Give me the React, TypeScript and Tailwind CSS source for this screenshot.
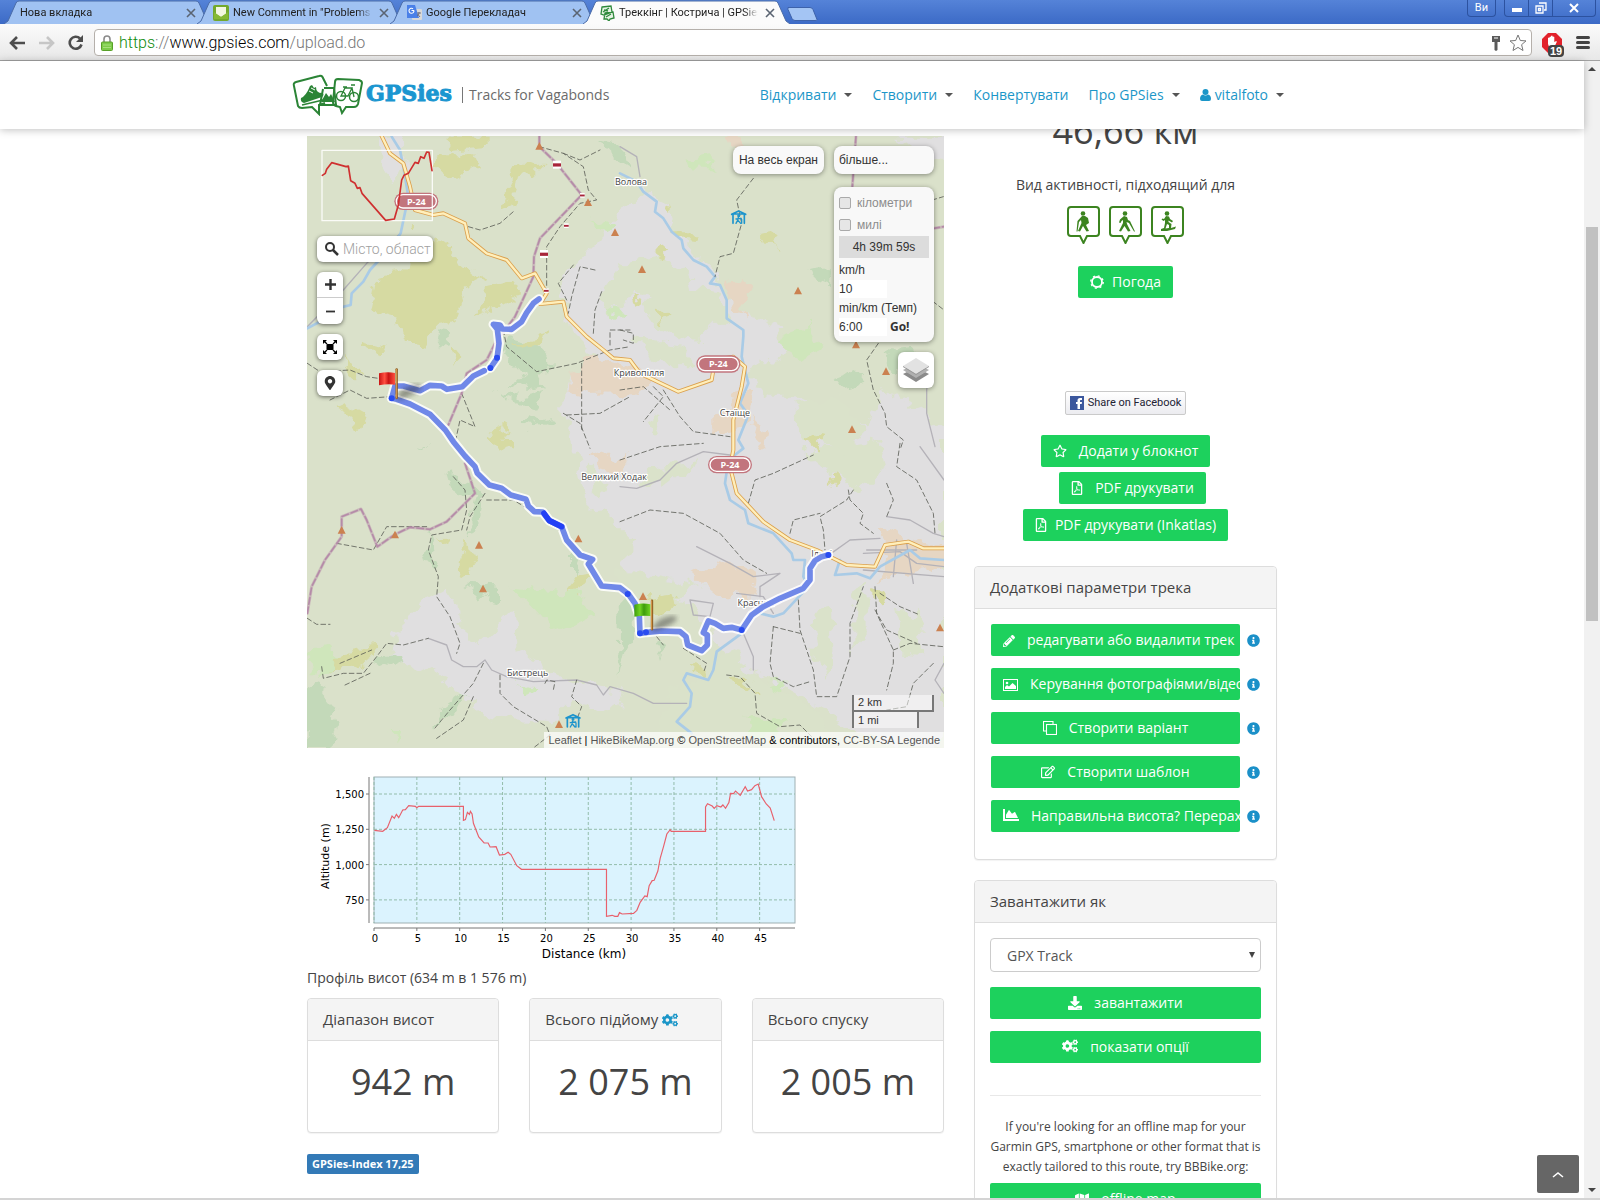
import type { ReactNode } from "react";
import {
  FaChartArea,
  FaCogs,
  FaDownload,
  FaInfoCircle,
  FaMap,
  FaMapMarkerAlt,
  FaPencilAlt,
  FaRegEdit,
  FaRegFilePdf,
  FaRegStar,
} from "react-icons/fa";

const tabs = [
  { title: "Нова вкладка", icon: null },
  { title: 'New Comment in "Problems in', icon: "mail" },
  { title: "Google Перекладач", icon: "translate" },
  { title: "Треккінг | Кострича | GPSies", icon: "gpsies", active: true },
];

const navItems = [
  { label: "Відкривати", caret: true },
  { label: "Створити", caret: true },
  { label: "Конвертувати", caret: false },
  { label: "Про GPSies", caret: true },
  { label: "vitalfoto", caret: true, user: true },
];

const stats = [
  { title: "Діапазон висот", value: "942 m" },
  { title: "Всього підйому", value: "2 075 m", cogs: true },
  { title: "Всього спуску", value: "2 005 m" },
];

// Map drawing, three units per pixel
const yellowPatches = [
  "M330 305 L440 330 L470 400 L560 440 L500 470 L470 560 L400 600 L380 650 L320 640 L300 560 L210 540 L230 440 L320 420Z",
  "M420 70 L520 70 L540 110 L470 140 L400 120Z",
  "M430 20 L560 20 L560 50 L460 60Z",
  "M660 105 L740 90 L690 140 L650 150 L640 220 L600 240 L620 180Z",
  "M560 470 L640 450 L650 500 L590 530 L520 560 L560 510Z",
  "M630 640 L740 600 L730 640 L660 650Z",
  "M110 810 L200 860 L180 900 L130 850Z",
  "M140 680 L185 740 L170 760 L130 720Z",
  "M570 910 L620 890 L600 950 L570 930Z",
  "M190 630 L260 650 L250 670 L195 650Z",
  "M455 650 L490 690 L470 710Z",
  "M90 1615 L130 1570 L215 1555 L220 1585 L150 1610Z",
  "M470 1320 L495 1230 L530 1320 L520 1335Z",
  "M410 1220 L450 1215 L440 1240Z",
  "M570 930 L640 930 L635 965 L590 950Z",
  "M810 1330 L880 1320 L860 1370 L820 1390Z",
  "M1120 310 L1190 310 L1180 335 L1130 330Z",
  "M1090 220 L1120 225 L1110 250Z",
  "M1390 320 L1440 310 L1425 360Z",
  "M1060 365 L1110 360 L1100 390Z",
  "M1040 1400 L1120 1390 L1130 1430 L1060 1450Z",
  "M1160 1605 L1230 1610 L1220 1640 L1170 1625Z",
  "M1280 1635 L1340 1640 L1370 1700 L1320 1680Z",
  "M1720 1380 L1760 1390 L1750 1430 L1720 1410Z",
  "M1000 490 L1020 490 L1010 530Z",
  "M1070 545 L1110 550 L1090 580Z",
  "M1520 920 L1580 930 L1550 960Z",
  "M1590 1050 L1620 1045 L1615 1080Z",
];
const greenPatches = [
  "M610 610 L700 630 L740 680 L745 740 L660 735 L600 660Z",
  "M590 780 L660 800 L745 780 L710 830 L650 820Z",
  "M660 880 L750 855 L740 880 L680 900Z",
  "M415 610 L450 615 L445 645 L410 640Z",
  "M890 25 L960 40 L990 120 L940 80Z",
  "M440 1030 L510 1060 L550 1080 L520 1220 L505 1160 L520 1100 L450 1065Z",
  "M380 1250 L395 1210 L410 1290 L400 1310 L370 1290Z",
  "M490 1360 L600 1370 L600 1410 L550 1400Z",
  "M810 1260 L835 1280 L810 1340Z",
  "M230 1600 L240 1570 L320 1565 L280 1620Z",
  "M400 1800 L430 1740 L500 1690 L450 1770Z",
  "M20 1680 L60 1660 L110 1780 L90 1854 L20 1854Z",
  "M350 960 L400 920 L370 950Z",
  "M620 760 L720 730 L740 770 L690 775Z",
  "M1600 750 L1670 725 L1700 760 L1640 780Z",
  "M1760 660 L1840 650 L1880 710 L1900 760 L1780 710Z",
  "M1510 430 L1590 420 L1580 460 L1550 450Z",
  "M955 1450 L1000 1400 L1010 1500 L980 1560 L960 1640Z",
  "M1060 1520 L1100 1540 L1080 1590Z",
];
const brightPatches = [
  "M1440 620 L1520 590 L1560 650 L1500 690 L1450 660Z",
  "M1150 80 L1230 70 L1250 110 L1180 105Z",
  "M640 1370 L840 1390 L880 1450 L760 1500 L700 1430Z",
  "M880 250 L940 290 L920 330Z",
  "M925 540 L985 550 L960 570Z",
  "M20 1560 L90 1550 L120 1600 L50 1640Z",
  "M1400 1660 L1450 1650 L1450 1680Z",
  "M1330 1760 L1460 1780 L1420 1820 L1350 1800Z",
  "M270 1800 L300 1800 L295 1835Z",
  "M640 1650 L700 1670 L690 1700Z",
];
const greyPatches = [
  "M780 460 L860 370 L900 330 L960 240 L1040 200 L1120 300 L1230 430 L1320 540 L1440 590 L1460 680 L1340 720 L1400 800 L1480 800 L1560 840 L1700 880 L1740 780 L1800 800 L1932 890 L1932 1854 L1700 1830 L1540 1720 L1400 1640 L1280 1600 L1240 1500 L1180 1440 L1050 1380 L960 1290 L1010 1240 L960 1190 L850 1090 L830 960 L790 850 L790 760 L900 690 L810 600Z",
  "M245 20 L300 20 L330 120 L270 150 L240 100Z",
  "M350 1420 L440 1370 L470 1480 L540 1540 L640 1440 L650 1560 L820 1660 L960 1690 L940 1740 L820 1720 L760 1780 L560 1760 L420 1640 L270 1570Z",
  "M1790 20 L1932 20 L1932 90 L1880 80Z",
  "M1030 180 L1110 220 L1130 300 L1040 260Z",
];
const groveOverGrey = [
  "M1510 960 L1740 930 L1760 1020 L1680 1070 L1600 1040Z",
  "M1080 1010 L1180 1000 L1090 1070 L1010 1050Z",
  "M960 1320 L1200 1370 L1100 1430 L960 1390Z",
  "M1200 1650 L1300 1560 L1340 1620 L1560 1750 L1600 1854 L1060 1854 L1100 1700Z",
  "M1660 1380 L1700 1360 L1700 1520 L1660 1560Z",
  "M1780 1440 L1860 1450 L1870 1570 L1800 1560Z",
  "M1040 860 L1100 870 L1070 920Z",
  "M1130 470 L1260 480 L1280 560 L1200 640 L1080 600 L1020 520Z",
  "M960 400 L1100 380 L1180 440 L1120 520 L1000 480 L940 560 L900 500Z",
  "M1480 820 L1600 800 L1700 900 L1640 960 L1500 920Z",
  "M1000 620 L1160 650 L1180 700 L1060 700Z",
  "M880 1010 L930 1060 L900 1100 L860 1060Z",
  "M1540 1450 L1590 1440 L1600 1600 L1560 1640Z",
];
const sandPatches = [
  "M830 710 L880 680 L960 700 L1030 720 L1070 750 L1000 790 L870 795 L790 775Z",
  "M1285 460 L1330 450 L1360 480 L1330 520 L1345 560 L1300 550Z",
  "M1310 780 L1370 780 L1340 900 L1240 910 L1240 870Z",
  "M1180 1340 L1270 1290 L1370 1340 L1360 1400 L1240 1390Z",
  "M1370 850 L1400 910 L1390 950 L1350 930Z",
  "M1720 1180 L1800 1210 L1932 1250 L1932 1300 L1850 1330 L1730 1350 L1780 1280Z",
  "M870 970 L960 1000 L1000 970 L960 1030 L900 1015Z",
  "M1260 30 L1310 0 L1320 60Z",
];
const rivers = [
  "M275 20 L300 60 L310 110 L325 200 L302 310 L270 355 L210 420 L190 455 L155 490 L152 525 L110 535 L60 575 L22 595",
  "M960 130 L1010 155 L1030 185 L1070 215 L1065 245 L1090 265 L1115 305 L1145 330 L1150 355 L1180 390 L1220 410 L1245 440 L1230 460 L1260 465 L1280 510 L1280 565 L1330 600 L1330 620 L1325 680 L1345 760 L1320 820 L1345 855 L1315 930 L1330 955 L1285 990 L1275 1060 L1290 1110 L1335 1140 L1345 1180 L1420 1210 L1475 1270 L1480 1290 L1515 1290 L1510 1340 L1525 1370 L1450 1450 L1420 1460 L1380 1450",
  "M1620 1290 L1605 1335 L1670 1330 L1710 1345 L1740 1310 L1830 1260 L1860 1285 L1932 1290",
  "M1325 1510 L1250 1565 L1240 1620 L1225 1650 L1160 1630 L1150 1650 L1175 1690 L1170 1730 L1130 1775 L1175 1810",
];
const mainRoad =
  "M245 18 L270 70 L310 100 L330 170 L345 240 L400 255 L430 250 L495 280 L505 325 L560 370 L620 390 L665 445 L705 430 L740 490 L720 522 L790 515 L800 560 L860 620 L910 660 L940 685 L990 690 L1020 730 L1135 785 L1235 750 L1245 690 L1300 680 L1335 710 L1325 770 L1300 870 L1300 960 L1290 1010 L1310 1090 L1390 1175 L1470 1230 L1550 1260 L1640 1305 L1725 1310 L1755 1245 L1825 1235 L1870 1255 L1932 1255";
const borders = [
  "M718 18 L718 50 L770 100 L845 195 L720 325 L702 380 L700 440 L645 560 L585 640 L560 690 L500 730 L485 790 L445 885",
  "M495 1000 L525 1090 L440 1175 L390 1198 L330 1192 L285 1213 L232 1250 L200 1170 L183 1137 L125 1160 L125 1220 L75 1290 L35 1370 L22 1450",
  "M1668 18 L1657 170",
  "M1870 300 L1932 290",
];
const footpaths = [
  "M718 50 L790 70 L850 110 L865 180 L890 210 L840 220 L780 290 L740 350 L740 480",
  "M790 70 L840 90 L900 60",
  "M505 290 L540 300 L600 280 L640 245",
  "M610 600 L620 650 L710 725 L830 700 L930 660 L990 650",
  "M820 405 L775 460 L800 510 M885 420 L840 410 L815 500 L805 550",
  "M905 485 L885 540 L880 610 M930 645 L930 600 L990 600",
  "M790 850 L840 880 L870 955 M845 700 L845 900 M800 855 L900 850 L990 800",
  "M22 700 L60 725 L150 720 L200 740 L270 750 M90 810 L150 780 L200 805 L270 800",
  "M485 790 L525 890 L480 870 L465 940",
  "M110 1240 L220 1260 L260 1190 L380 1190 M460 1040 L495 1080 L500 1140 L485 1200 L395 1215 L385 1260 L415 1340 L410 1400 L450 1460 L480 1540 L470 1570",
  "M555 1090 L510 1160 L500 1200 M560 1110 L640 1110 L690 1140",
  "M22 1465 L50 1483 L90 1483",
  "M65 1610 L70 1645 L130 1630 L190 1630 L230 1580 L260 1540 L310 1545 L385 1525 M120 1600 L215 1560 M135 1665 L210 1630",
  "M550 1600 L520 1660 L450 1740 L400 1800 M520 1700 L490 1770 L410 1825",
  "M600 1635 L600 1690 L640 1730 L740 1790 L750 1815 L700 1854",
  "M830 1650 L815 1700 L845 1730 L830 1770 M735 1660 L740 1650 L765 1655 L760 1680",
  "M1360 145 L1310 210 L1325 280 L1300 370 L1260 380 L1245 440",
  "M960 600 L1000 610 L1000 640 L970 630 M1060 770 L1090 800 L1030 875 M1090 780 L1140 860 L1180 905 L1290 920",
  "M960 780 L1030 770 L1110 840",
  "M1735 640 L1700 690 L1720 780 L1755 850 L1760 890 L1810 930 L1800 960",
  "M960 990 L1080 950 L1210 940 M960 1175 L1050 1140 L1150 1150 L1260 1210 L1330 1290 L1400 1330",
  "M1345 1120 L1365 1050 L1420 1030 L1540 975",
  "M1660 1080 L1640 1110 L1560 1160 L1570 1200 L1575 1260 M1645 1080 L1650 1110 L1690 1150 L1680 1180 L1720 1210",
  "M1800 940 L1790 1010 L1850 1050 L1900 1150 L1905 1210 M1760 1060 L1780 1110 L1760 1160",
  "M1470 1210 L1480 1170 L1560 1150",
  "M1420 1490 L1410 1600 L1420 1640 L1480 1670 L1530 1655 M1420 1490 L1500 1510",
  "M1495 1410 L1500 1500 L1540 1620 L1550 1700 L1610 1700 L1650 1580 L1650 1480 L1690 1370",
  "M1725 1370 L1730 1450 L1780 1560 L1780 1600 L1760 1680 M1740 1390 L1800 1430 L1860 1455 M1780 1560 L1830 1540 L1930 1550",
  "M1725 1440 L1760 1500 L1850 1540 M1900 1600 L1840 1660 L1820 1730 L1760 1740",
  "M1280 1635 L1320 1640 L1365 1690 L1370 1750 L1440 1790 L1500 1785 L1535 1820",
  "M1070 1520 L1090 1545 M1150 1555 L1220 1600 L1210 1630",
  "M1880 500 L1932 540 M1830 230 L1930 200",
];
const greyRoads = [
  "M302 310 L200 400 L130 480 L22 590",
  "M385 1525 L440 1545 L455 1590 L490 1610 L530 1610 L555 1590 L575 1620 L620 1640 L700 1655 L830 1650 L890 1665 L910 1695 L930 1670 L1000 1690 L1060 1720 L1160 1720",
  "M960 50 L1010 80 L1020 140",
  "M960 1070 L1010 1075 L1080 1050 L1130 1000 L1210 965 L1290 975",
  "M1190 1250 L1290 1300 L1360 1340 L1440 1330 L1380 1370 L1380 1400",
  "M1170 1410 L1240 1420 L1230 1460 L1180 1455Z",
  "M1310 1390 L1390 1400 L1420 1450 M1330 1510 L1360 1580 L1360 1620",
  "M1580 1280 L1650 1230 L1740 1225 M1690 1270 L1800 1265 L1850 1300 L1932 1310",
  "M1760 1160 L1830 1170 L1900 1210 L1932 1220 M1860 950 L1932 1050",
  "M1890 710 L1880 780 L1880 850 L1905 950",
  "M1700 1260 L1850 1260 M1690 1320 L1932 1340 M1790 1230 L1780 1340 M1820 1240 L1840 1360",
  "M1932 1600 L1905 1650 L1932 1690",
];
const peaks = [
  [718, 48], [864, 217], [945, 307], [1026, 418], [1494, 482], [1668, 644], [1758, 724], [1656, 898],
  [125, 1200], [285, 1214], [537, 1245], [549, 1376], [835, 1226], [777, 1783], [1029, 1399], [1920, 1493],
];
const barriers = [[771, 104, 24], [847, 196, 14], [799, 287, 14], [732, 372, 24], [739, 482, 14]];
const track = [
  "M717 507 L700 520 L680 548 L665 575 L635 598 L607 597 L600 585 L580 583 L592 598 L597 640 L591 685 L571 714",
  "M553 722 L520 738 L487 770 L441 778 L425 768 L390 766 L360 782 L310 768 L285 768 L275 805 L290 808 L330 822 L390 853 L436 900 L460 935 L495 978 L525 1010 L532 1030 L568 1065 L605 1075 L632 1095 L678 1108 L685 1128 L703 1145 L728 1146 L748 1172 L785 1190 L800 1230 L840 1275 L878 1288 L865 1302 L905 1368 L960 1373 L985 1392 L1005 1420 L1018 1460 L1020 1510 L1040 1507 L1085 1503 L1140 1505 L1158 1520 L1163 1545 L1205 1562 L1222 1545 L1222 1515 L1210 1508 L1225 1473 L1245 1480 L1270 1495 L1295 1492 L1325 1500 L1355 1455 L1390 1430 L1440 1405 L1510 1375 L1530 1350 L1530 1315 L1545 1292 L1565 1280 L1585 1275",
];
const trackDots = [[591, 683], [571, 714], [275, 805], [983, 1392], [1020, 1510], [1038, 1507], [1325, 1500], [1585, 1275]];
const places = [
  ["Волова", 993, 166], ["Кривопілля", 1017, 737], ["Стаїще", 1305, 859], ["Великий Ходак", 942, 1051],
  ["Красник", 1367, 1429], ["Бистрець", 683, 1638], ["Ільці", 1565, 1282],
] as const;
const shields = [[349, 214], [1255, 702], [1290, 1004]];
const huts = [[1316, 262], [819, 1773]];

// Altitude trace, three units per pixel
const profile =
  "M223 196 L248 199 L262 188 L276 153 L283 160 L289 148 L296 158 L308 135 L316 134 L326 122 L346 124 L350 128 L356 124 L490 124 L490 166 L496 164 L502 142 L508 148 L511 139 L516 147 L520 175 L536 216 L552 234 L564 234 L570 246 L588 245 L598 270 L614 268 L624 262 L632 268 L650 302 L664 313 L919 313 L919 454 L936 451 L944 454 L953 454 L958 443 L966 447 L1000 445 L1010 436 L1020 412 L1034 393 L1041 395 L1047 362 L1056 347 L1062 346 L1073 318 L1080 280 L1090 245 L1100 207 L1110 194 L1113 199 L1216 199 L1216 126 L1222 116 L1236 123 L1242 130 L1250 122 L1262 126 L1268 120 L1276 130 L1286 113 L1291 85 L1300 86 L1306 78 L1320 91 L1335 65 L1342 78 L1354 74 L1364 62 L1374 57 L1384 95 L1398 117 L1410 129 L1422 167";

function Caret() {
  return <span className="ml-1 inline-block border-x-4 border-t-4 border-x-transparent border-t-[#555] align-middle" />;
}

function Favicon({ kind }: { kind: string }) {
  if (kind === "mail")
    return (
      <svg viewBox="0 0 16 16" className="size-4 shrink-0">
        <rect width="16" height="16" rx="2" fill="#73a92c" />
        <path d="M3 2h10v7l-5 3-5-3z" fill="#f3f7df" />
        <path d="M1 7l7 5 7-5v7H1z" fill="#86b934" />
      </svg>
    );
  if (kind === "translate")
    return (
      <svg viewBox="0 0 16 16" className="size-4 shrink-0">
        <rect x="6" y="4" width="10" height="11" rx="1" fill="#d9d9d9" />
        <path d="M1 0h8l4 13H1z" fill="#4a80e8" />
        <path d="M8 5.500A2.500 2.500 0 1 1 7 3.700M5.500 5.500H8" fill="none" stroke="#fff" strokeWidth="1.100" />
        <path d="M11 8h4M13 7v1c0 2-2 3-2 3m.5-2 2.500 3" fill="none" stroke="#667" strokeWidth=".9" />
      </svg>
    );
  return (
    <svg viewBox="0 0 16 16" className="size-4 shrink-0">
      <path d="M3 2l9-1 1 6-8 3-3-1zM6 8l8-1 1 6-4 1-1 2-2-2H5z" fill="#e7f4e5" stroke="#2f8a3c" strokeWidth="1.300" />
      <path d="M4 7l6-4M7 12l5-3M5 5l4 1" stroke="#2f8a3c" strokeWidth="1.300" />
    </svg>
  );
}

function BrowserChrome() {
  return (
    <div className="shrink-0 font-[Roboto,sans-serif]">
      <div className="flex h-6 items-start justify-between bg-linear-to-b from-[#5583d8] to-[#3c6ac6]">
        <div className="flex pl-1">
          {tabs.map((tab) => (
            <div key={tab.title} className={tab.active ? "relative z-10 -mr-3.5 h-6 w-[207px]" : "relative -mr-3.5 h-6 w-[207px]"}>
              <svg viewBox="0 0 207 24" preserveAspectRatio="none" className="absolute inset-0 size-full">
                <path d="M0 24L4 21L12 3Q13 1 15 1H192Q194 1 195 3L203 21L207 24" fill={tab.active ? "#fbfbfb" : "#a0c2f2"} stroke="#4b6ca8" />
              </svg>
              <div className="relative flex h-6 items-center gap-1 pt-0.5 pr-3 pl-4 text-[11px] text-[#222]">
                {tab.icon && <Favicon kind={tab.icon} />}
                <span className="flex-1 overflow-hidden whitespace-nowrap mask-r-from-90%">{tab.title}</span>
                <button aria-label="Закрити вкладку" className="flex size-4 items-center justify-center">
                  <svg viewBox="0 0 10 10" className="size-2.5">
                    <path d="M1 1l8 8M9 1L1 9" stroke="#5a6472" strokeWidth="1.600" />
                  </svg>
                </button>
              </div>
            </div>
          ))}
          <button aria-label="Нова вкладка" className="ml-2.5 pt-1">
            <svg viewBox="0 0 32 15" className="h-4 w-8">
              <path d="M2 1H24Q26 1 27 3L31 13Q31 14 29 14H9Q7 14 6 12L2 3Z" fill="#a4c5f4" stroke="#3d62aa" />
            </svg>
          </button>
        </div>
        <div className="flex gap-2 pr-1 text-[11px] text-white">
          <button className="h-[17px] rounded-b border border-t-0 border-[#2c52a0] px-[7px] leading-4">Ви</button>
          <div className="flex h-[17px] divide-x divide-[#2c52a0] rounded-b border border-t-0 border-[#2c52a0]">
            <button aria-label="Згорнути" className="flex w-6 items-end justify-center pb-1">
              <span className="h-1 w-2.5 bg-white" />
            </button>
            <button aria-label="Розгорнути" className="flex w-6 items-center justify-center">
              <svg viewBox="0 0 12 12" className="size-3">
                <path d="M4 1h7v7H9M1 4h7v7H1zM3.500 6.500h2v2h-2z" fill="none" stroke="#fff" strokeWidth="1.300" />
              </svg>
            </button>
            <button aria-label="Закрити" className="flex w-[42px] items-center justify-center font-bold">
              <svg viewBox="0 0 10 10" className="size-2.5">
                <path d="M1 1l8 8M9 1L1 9" stroke="#fff" strokeWidth="2" />
              </svg>
            </button>
          </div>
        </div>
      </div>
      <div className="flex h-[37px] items-center gap-2.5 border-b border-[#a3a3a3] bg-linear-to-b from-[#fbfbfb] to-[#e8e8e8] pt-px pr-2.5 pl-2">
        <div className="flex items-center gap-3">
          <button aria-label="Назад">
            <svg viewBox="0 0 18 16" className="h-4 w-[18px]">
              <path d="M17 8H3M9 2L3 8l6 6" fill="none" stroke="#4d4d4d" strokeWidth="2.600" />
            </svg>
          </button>
          <button aria-label="Вперед">
            <svg viewBox="0 0 18 16" className="h-4 w-[18px]">
              <path d="M1 8h14M9 2l6 6-6 6" fill="none" stroke="#c6c6c6" strokeWidth="2.600" />
            </svg>
          </button>
          <button aria-label="Оновити">
            <svg viewBox="0 0 16 16" className="size-4">
              <path d="M13.500 9.500A6 6 0 1 1 12 3.500" fill="none" stroke="#4d4d4d" strokeWidth="2.600" />
              <path d="M15 0v7H8z" fill="#4d4d4d" />
            </svg>
          </button>
        </div>
        <div className="flex h-[27px] flex-1 items-center rounded-sm border border-[#b5b0ab] bg-white pr-1 pl-1.5">
          <svg viewBox="0 0 12 16" className="h-4 w-3">
            <path d="M3 7V4a3 3 0 0 1 6 0v3" fill="none" stroke="#8b8b8b" strokeWidth="1.600" />
            <rect x=".5" y="7" width="11" height="8.500" rx="1" fill="#7ccb4a" stroke="#58a028" />
            <path d="M2 10h8M2 12.500h8" stroke="#a7e07c" />
          </svg>
          <div className="flex-1 pl-1.5 text-base font-light text-[#777]">
            <span className="text-[#0c8a0c]">https</span>://<span className="text-black">www.gpsies.com</span>/upload.do
          </div>
          <svg viewBox="0 0 10 16" className="mr-2 h-4 w-2.5">
            <path d="M1 1h8v6H6.500v8L5 16l-1.500-1V7H1z" fill="#5a5a5a" />
            <path d="M3 3h4" stroke="#fff" />
          </svg>
          <svg viewBox="0 0 18 18" className="size-[18px]">
            <path d="M9 1l2.300 5.500 5.700.4-4.400 3.800 1.400 5.800L9 13.400l-5 3.100 1.400-5.800L1 6.900l5.700-.4z" fill="#fff" stroke="#777" />
          </svg>
        </div>
        <div className="relative">
          <svg viewBox="0 0 20 20" className="size-5">
            <path d="M6 0h8l6 6v8l-6 6H6l-6-6V6z" fill="#e2222b" />
            <path d="M6 11V5q1-1 1.500 0V4Q8.500 3 9 4V3q1-1 1.700 0v1q1-.8 1.600 0v5l2-1q1 .5 0 2l-3 6H8z" fill="#fff" />
          </svg>
          <span className="absolute top-3 left-1.5 rounded-sm bg-[#444] px-0.5 font-['Liberation_Sans',sans-serif] text-[11px] leading-3 font-bold text-white">19</span>
        </div>
        <button aria-label="Меню" className="ml-1 flex w-3.5 flex-col gap-0.5">
          <span className="h-[3px] rounded-sm bg-[#444]" />
          <span className="h-[3px] rounded-sm bg-[#444]" />
          <span className="h-[3px] rounded-sm bg-[#444]" />
        </button>
      </div>
    </div>
  );
}

function Logo() {
  return (
    <svg viewBox="0 0 72 42" className="h-[42px] w-[72px] shrink-0" fill="none" stroke="#2b8436" strokeWidth="2">
      <path d="M4 8Q1 9 2 12L6 32Q7 34 10 34L20 33L27 40V31L33 29M35 12L31 4Q30 1 27 2L4 8" />
      <path d="M32 14H42L44 31H28L31 15" />
      <path d="M46 5Q43 5 43 8L41 28Q41 31 44 32L48 33L50 39L54 33L62 33Q65 33 66 30L70 9Q70 7 67 6Z" />
      <path d="M9 24Q14 22 18 12L20 11L22 14L24 13Q24 19 30 19Q33 20 30 23L12 29Q8 28 9 24Z" fill="#2b8436" stroke="none" />
      <path d="M17 17l4 2M19 14l4 2" stroke="#fff" strokeWidth="1" />
      <path d="M10 31L31 26" strokeWidth="1.500" />
      <path d="M29 28l5-9 3 4 2-3 4 8z" fill="#2b8436" stroke="none" />
      <circle cx="49" cy="22" r="4.500" strokeWidth="1.500" />
      <circle cx="62" cy="23" r="4.500" strokeWidth="1.500" />
      <path d="M49 22L53 14H60L56 22ZM60 14L62 23M51 13h4M59 11h4" strokeWidth="1.300" />
    </svg>
  );
}

function SiteHeader() {
  return (
    <header className="relative z-10 h-[68px] shrink-0 bg-white shadow-[0_1px_8px_rgba(0,0,0,0.25)]">
      <div className="mx-auto flex h-full max-w-[1000px] items-center justify-between pb-px text-sm">
        <a href="#" className="flex items-center">
          <Logo />
          <span className="ml-0.5 pb-1 font-['DejaVu_Serif',serif] text-[22px] leading-7 font-black text-[#1b96d0] [-webkit-text-stroke:1px_#1b96d0]">GPSies</span>
          <span className="ml-2.5 border-l border-[#777] pl-1.5 leading-4 text-[#6b6b6b]">Tracks for Vagabonds</span>
        </a>
        <nav className="flex gap-5 pr-2 text-[#1b96c8]">
          {navItems.map((item) => (
            <a key={item.label} href="#" className="flex items-center gap-1">
              {item.user && (
                <svg viewBox="0 0 11 12" className="h-3 w-[11px]" fill="currentColor">
                  <circle cx="5.500" cy="3" r="3" />
                  <path d="M3 5.500Q5.500 7.500 8 5.500Q11 6 11 10Q11 12 9 12H2Q0 12 0 10Q0 6 3 5.500Z" />
                </svg>
              )}
              {item.label}
              {item.caret && <Caret />}
            </a>
          ))}
        </nav>
      </div>
    </header>
  );
}

function Flag({ x, y, from, to }: { x: number; y: number; from: string; to: string }) {
  const id = `flag${x}`;
  return (
    <g transform={`translate(${x} ${y})`}>
      <linearGradient id={id}>
        <stop offset="0" stopColor={from} />
        <stop offset="0.35" stopColor={to} />
        <stop offset="0.6" stopColor={from} />
        <stop offset="1" stopColor={to} />
      </linearGradient>
      <path d="M54 80Q60 40 120 35Q150 50 54 85Z" fill="#333" opacity=".45" filter="url(#soft)" />
      <path d="M53 -10V76" stroke="#8a5a20" strokeWidth="7" />
      <path d="M52 -10V76" stroke="#e0a050" strokeWidth="3" />
      <path d="M0 2Q25 -4 48 1V36Q25 33 0 38Z" fill={`url(#${id})`} />
    </g>
  );
}

function MapCanvas() {
  return (
    <svg viewBox="21 18 1911 1836" preserveAspectRatio="xMidYMid slice" className="absolute inset-0 size-full bg-[#dae1ca]" strokeLinejoin="round" strokeLinecap="round">
      <defs>
        <filter id="rough" x="0" y="0" width="100%" height="100%">
          <feTurbulence type="fractalNoise" baseFrequency="0.02" numOctaves="3" seed="4" />
          <feDisplacementMap in="SourceGraphic" scale="70" xChannelSelector="R" yChannelSelector="G" />
        </filter>
        <filter id="soft">
          <feGaussianBlur stdDeviation="8" />
        </filter>
      </defs>
      <g filter="url(#rough)">
        <rect x="21" y="18" width="1911" height="1836" fill="#dae1ca" />
        {greyPatches.map((d) => <path key={d} d={d} fill="#e0dfe0" />)}
        {groveOverGrey.map((d) => <path key={d} d={d} fill="#dae2ca" />)}
        {sandPatches.map((d) => <path key={d} d={d} fill="#e6d6c3" />)}
        {brightPatches.map((d) => <path key={d} d={d} fill="#cfe6bb" />)}
        {greenPatches.map((d) => <path key={d} d={d} fill="#c3d9b9" />)}
        {yellowPatches.map((d) => <path key={d} d={d} fill="#d6daa2" />)}
      </g>
      <g fill="none">
        {greyRoads.map((d) => <path key={d} d={d} stroke="#b4b2b8" strokeWidth="4" />)}
        {rivers.map((d) => <path key={d} d={d} stroke="#a9cbe6" strokeWidth="8" />)}
        {footpaths.map((d) => <path key={d} d={d} stroke="#5d5f58" strokeWidth="2.500" strokeDasharray="14 9" />)}
        {borders.map((d) => (
          <g key={d} stroke="#b58ba8">
            <path d={d} strokeWidth="9" opacity=".45" />
            <path d={d} strokeWidth="5" strokeDasharray="20 9" />
          </g>
        ))}
        <path d={mainRoad} stroke="#dba04d" strokeWidth="12" />
        <path d={mainRoad} stroke="#ffefbb" strokeWidth="7" />
      </g>
      {peaks.map(([x, y]) => <path key={x} d={`M${x - 12} ${y + 11}L${x} ${y - 12}L${x + 12} ${y + 11}Z`} fill="#cb8150" />)}
      {barriers.map(([x, y, w]) => (
        <g key={x}>
          <rect x={x - w / 2} y={y - w / 2} width={w} height={w} fill="#fff" />
          <rect x={x - w / 2} y={y - w / 6} width={w} height={w / 2.5} fill="#a8253a" />
        </g>
      ))}
      {huts.map(([x, y]) => (
        <g key={x} transform={`translate(${x} ${y})`} fill="none" stroke="#1d94cc" strokeWidth="5">
          <path d="M-21 -9L0 -19L21 -9M-17 -9V18M17 -9V18M-17 -10H17" />
          <circle cx="0" cy="-5" r="2" />
          <path d="M-1 0L-3 9L-8 18M-2 9L6 18M-8 5L8 3M9 6V18" strokeWidth="4" />
        </g>
      ))}
      <g textAnchor="middle" fontFamily="Open Sans, sans-serif">
        {places.map(([name, x, y]) => (
          <text key={name} x={x} y={y} fontSize="27" fill="#444" stroke="#fff" strokeWidth="7" paintOrder="stroke">{name}</text>
        ))}
        {shields.map(([x, y]) => (
          <g key={x}>
            <rect x={x - 66} y={y - 26} width="132" height="52" rx="26" fill="#c2757d" />
            <rect x={x - 60} y={y - 20} width="120" height="40" rx="20" fill="#c2757d" stroke="#fff" strokeWidth="4" />
            <text x={x} y={y + 10} fontSize="27" fontWeight="700" fill="#fff">P-24</text>
          </g>
        ))}
      </g>
      <g fill="none">
        {track.map((d) => (
          <g key={d}>
            <path d={d} stroke="#fff" strokeWidth="29" opacity=".85" />
            <path d={d} stroke="#7088e8" strokeWidth="17" />
          </g>
        ))}
        <path d="M732 1150L748 1172L785 1190" stroke="#2340f5" strokeWidth="17" />
      </g>
      {trackDots.map(([x, y]) => <circle key={x} cx={x} cy={y} r="9" fill="#2a4cf0" />)}
      <Flag x={237} y={728} from="#c81414" to="#ff5040" />
      <Flag x={1003} y={1422} from="#3c9c0c" to="#72d424" />
      <g fill="none">
        <rect x="66" y="61" width="331" height="211" stroke="#fff" strokeWidth="4" opacity=".85" />
        <path
          d="M67 136L76 130L80 118L95 98L138 110L145 108L152 152L165 160L172 175L180 173L186 190L257 271L283 267L295 225L305 150L312 136L325 130L345 97L355 100L362 80L372 85L380 66L387 67L396 122"
          stroke="#cf3030"
          strokeWidth="5"
        />
      </g>
    </svg>
  );
}

function MapPanel() {
  const box = "rounded-md bg-white shadow-[0_1px_4px_rgba(0,0,0,0.55)]";
  return (
    <section className="relative h-[612px] overflow-hidden font-['Liberation_Sans',sans-serif] text-xs text-[#333]">
      <MapCanvas />
      <div className="absolute top-[100px] left-2.5 flex flex-col gap-2.5">
        <label className={`${box} flex h-[26px] w-[116px] items-center gap-1 overflow-hidden pl-2`}>
          <svg viewBox="0 0 14 14" className="size-3.5 shrink-0">
            <circle cx="5" cy="5" r="4" fill="none" stroke="#333" strokeWidth="2" />
            <path d="M8 8l5 5" stroke="#333" strokeWidth="2.500" />
          </svg>
          <input
            aria-label="Місто, область"
            placeholder="Місто, област"
            className="w-full min-w-0 font-[Roboto,sans-serif] text-sm font-light outline-none placeholder:text-[#a0a0a0]"
          />
        </label>
        <div className={`${box} w-[26px] divide-y divide-[#ccc]`}>
          <button aria-label="Наблизити" className="flex h-[26px] w-full items-center justify-center">
            <svg viewBox="0 0 11 11" className="size-[11px]"><path d="M5.500 0v11M0 5.500h11" stroke="#333" strokeWidth="2.400" /></svg>
          </button>
          <button aria-label="Віддалити" className="flex h-[26px] w-full items-center justify-center">
            <svg viewBox="0 0 11 11" className="size-[11px]"><path d="M1 5.500h9" stroke="#333" strokeWidth="1.800" /></svg>
          </button>
        </div>
        <button aria-label="На весь екран" className={`${box} flex size-[26px] items-center justify-center`}>
          <svg viewBox="0 0 14 14" className="size-3.5">
            <rect x="3.500" y="4" width="7" height="6" rx="1" />
            <path d="M0 0h4L0 4zM14 0v4l-4-4zM0 14v-4l4 4zM14 14h-4l4-4z" />
            <path d="M1 1l3 3M13 1l-3 3M1 13l3-3M13 13l-3-3" stroke="#000" strokeWidth="1.300" />
          </svg>
        </button>
        <button aria-label="Моє місце" className={`${box} flex size-[26px] items-center justify-center`}>
          <FaMapMarkerAlt className="size-3.5" />
        </button>
      </div>
      <div className="absolute top-2.5 right-2.5 flex items-start gap-2.5">
        <button className="h-7 rounded-lg bg-[#f9f9f9] px-1.5 shadow-[0_1px_5px_rgba(0,0,0,0.4)]">На весь екран</button>
        <div className="flex w-[100px] flex-col items-end gap-[10px]">
          <button className="mb-[3px] h-7 w-full rounded-lg bg-[#f9f9f9] px-[5px] text-left shadow-[0_1px_5px_rgba(0,0,0,0.4)]">більше...</button>
          <form className="w-full rounded-lg bg-[#f8f8f8] px-[5px] pt-[5px] pb-1.5 shadow-[0_1px_5px_rgba(0,0,0,0.4)]">
            <label className="flex h-[22px] items-center gap-1.5 text-[#8c8c8c]">
              <input type="checkbox" disabled className="size-3 appearance-none rounded-xs border border-[#aaa] bg-[#e6e6e6]" />
              кілометри
            </label>
            <label className="flex h-[22px] items-center gap-1.5 text-[#8c8c8c]">
              <input type="checkbox" disabled className="size-3 appearance-none rounded-xs border border-[#aaa] bg-[#e6e6e6]" />
              милі
            </label>
            <div className="h-[22px] bg-[#dcdcdc] text-center leading-[22px]">4h 39m 59s</div>
            <label htmlFor="speed" className="mt-0.5 block leading-5">km/h</label>
            <input id="speed" defaultValue="10" className="block h-[18px] w-12 bg-white" />
            <label htmlFor="pace" className="block leading-5">min/km (Темп)</label>
            <div className="flex items-center gap-[3px]">
              <input id="pace" defaultValue="6:00" className="h-[18px] w-12 bg-white" />
              <button type="button" className="font-['Open_Sans',sans-serif] font-bold">Go!</button>
            </div>
          </form>
          <button aria-label="Шари" className="flex size-9 items-center justify-center rounded-md bg-white shadow-[0_1px_5px_rgba(0,0,0,0.4)]">
            <svg viewBox="0 0 26 26" className="size-[26px]">
              <path d="M0 17l13 8 13-8-4-2-9 5-9-5z" fill="#8a8a8a" />
              <path d="M0 13l13 8 13-8-4-2-9 5-9-5z" fill="#b0b0b0" />
              <path d="M0 9l13-8 13 8-13 8z" fill="#e2e2e2" />
              <path d="M0 9l13 8 13-8v1l-13 8L0 10z" fill="#999" />
            </svg>
          </button>
        </div>
      </div>
      <div className="absolute right-2.5 bottom-5 flex w-[82px] flex-col items-start text-[11px]">
        <div className="w-[82px] border-2 border-t-0 border-[#777] bg-white/50 px-1 leading-[15px]">2 km</div>
        <div className="w-[67px] border-x-2 border-[#777] bg-white/50 px-1 leading-4">1 mi</div>
      </div>
      <div className="absolute right-0 bottom-0 bg-white/70 px-1 text-[11px] leading-4 whitespace-nowrap text-[#555]">
        <a href="#">Leaflet</a> <span className="text-black">|</span> <a href="#">HikeBikeMap.org</a> <span className="text-black">©</span> <a href="#">OpenStreetMap</a>{" "}
        <span className="text-black">&amp; contributors,</span> <a href="#">CC-BY-SA</a> <a href="#">Legende</a>
      </div>
    </section>
  );
}

function ElevationChart() {
  return (
    <svg viewBox="7 0 500 205" className="h-[205px] w-[500px]" fontFamily="DejaVu Sans, sans-serif" fontSize="10">
      <rect x="74" y="12" width="421" height="146" fill="#dbf3fe" stroke="#9fb0b3" />
      <path d="M69 12V158M74 163H495" stroke="#777" />
      {["1,500", "1,250", "1,000", "750"].map((label, i) => {
        const y = 29 + i * 35.3;
        return (
          <g key={label}>
            <path d={`M74 ${y}H495`} stroke="#93bcab" strokeDasharray="3 2" />
            <path d={`M66 ${y}H69`} stroke="#777" />
            <text x="64" y={y + 4} textAnchor="end">{label}</text>
          </g>
        );
      })}
      {[0, 5, 10, 15, 20, 25, 30, 35, 40, 45].map((km) => {
        const x = 74 + km * 8.57;
        return (
          <g key={km}>
            <path d={`M${x} 12V158`} stroke="#93bcab" strokeDasharray="3 2" />
            <path d={`M${x} 163V166`} stroke="#777" />
            <text x={x + 1} y="177" textAnchor="middle">{km}</text>
          </g>
        );
      })}
      <path d={profile} transform="scale(.3335 .3333)" fill="none" stroke="#e8606c" strokeWidth="3.500" />
      <text x="284" y="193" textAnchor="middle" fontSize="12">Distance (km)</text>
      <text transform="translate(29 91) rotate(-90)" textAnchor="middle" fontSize="11">Altitude (m)</text>
    </svg>
  );
}

function Panel({ title, children }: { title: ReactNode; children: ReactNode }) {
  return (
    <section className="rounded border border-[#ddd] bg-white shadow-[0_1px_1px_rgba(0,0,0,0.05)]">
      <h3 className="flex h-[42px] items-center gap-1 rounded-t border-b border-[#ddd] bg-[#f4f4f4] px-[15px] text-[15px] whitespace-nowrap">{title}</h3>
      {children}
    </section>
  );
}

function GreenButton({ icon, children, block }: { icon: ReactNode; children: string; block?: boolean }) {
  return (
    <button
      className={
        block
          ? "h-8 w-full min-w-0 overflow-hidden rounded-xs bg-[#1dd15d] px-3 text-center text-sm whitespace-nowrap text-white"
          : "h-8 rounded-xs bg-[#1dd15d] px-3 text-sm whitespace-nowrap text-white"
      }
    >
      <span className={block ? "mr-3 inline-block align-[-2px]" : "mr-2 inline-block align-[-2px]"}>{icon}</span>
      {children}
    </button>
  );
}

function Activity({ pose }: { pose: string }) {
  return (
    <svg viewBox="0 0 33 38" className="h-[38px] w-[33px]">
      <path d="M4 1H29Q32 1 32 4V27Q32 30 29 30H20L16.500 37L13 30H4Q1 30 1 27V4Q1 1 4 1Z" fill="#fff" stroke="#3c8420" strokeWidth="2" />
      <circle cx="16" cy="7.500" r="2.300" fill="#3c8420" />
      <path d={pose} fill="#3c8420" />
    </svg>
  );
}

const poses = [
  "M15 10L18 10L21 12L22 17L19 19L22 25L19.500 25.500L16 20L13 25.500L11 25L14.500 17L14 14L12 16L10.500 25.500H9.500L10.500 15Z",
  "M15 10L18 11L19 14L21 15L26 25.500H25L20 17L17.500 16L18 18L21.500 25L19 25.500L15.500 20L12 25.500L10 25L14 17L14 14L12.500 15L11.500 17L10 16.500L11 13.500Z",
  "M15 10L18 10.500L19 13L22 15L21 16.500L17.500 14.500V16L20.500 18L20 22L25 20.500L24 23L16 25L10 25L10 23L13 22L14 17V14L12.500 15L10.500 13.500L11.500 12.500L13 13ZM16 18L14.500 22.500L18 22L18 19Z",
];

const extraActions = [
  { label: "редагувати або видалити трек", icon: <FaPencilAlt className="size-3" /> },
  {
    label: "Керування фотографіями/відео",
    icon: (
      <svg viewBox="0 0 15 12" className="h-3 w-[15px]">
        <rect x=".5" y=".5" width="14" height="11" fill="none" stroke="#fff" />
        <circle cx="4" cy="4" r="1.300" fill="#fff" />
        <path d="M2 10V8l2-2 2 1.500L9.500 4 13 7v3z" fill="#fff" />
      </svg>
    ),
  },
  {
    label: "Створити варіант",
    icon: (
      <svg viewBox="0 0 14 14" className="size-3.5" fill="none" stroke="#fff" strokeWidth="1.100">
        <path d="M10 3.500V.5H.5V10h3" />
        <rect x="3.500" y="3.500" width="10" height="10" />
      </svg>
    ),
  },
  { label: "Створити шаблон", icon: <FaRegEdit className="size-3.5" /> },
  { label: "Направильна висота? Перерахувати", icon: <FaChartArea className="size-4" /> },
];

function SunIcon() {
  return (
    <svg viewBox="0 0 14 14" className="size-3.5" fill="none" stroke="#fff">
      <circle cx="7" cy="7" r="5" strokeWidth="1.800" />
      <circle cx="7" cy="7" r="6.200" strokeWidth="1.400" strokeDasharray="2 2.870" />
    </svg>
  );
}

function Sidebar() {
  return (
    <aside className="flex min-w-0 flex-col">
      <div className="-mt-5 text-center text-4xl leading-[44px] text-[#444]">46,66 км</div>
      <div className="flex flex-col items-center">
        <p className="mt-[22px] text-sm leading-5">Вид активності, підходящий для</p>
        <div className="mt-[11px] flex gap-[9px]">
          {poses.map((pose) => <Activity key={pose} pose={pose} />)}
        </div>
        <div className="mt-[22px]">
          <GreenButton icon={<SunIcon />}>Погода</GreenButton>
        </div>
        <button className="mt-[93px] mb-5 flex h-6 items-center gap-1 rounded-xs border border-[#cacaca] bg-linear-to-b from-white to-[#ececf0] px-1 font-[Roboto,sans-serif] text-[11px] whitespace-nowrap text-[#223]">
          <svg viewBox="0 0 14 14" className="size-3.5">
            <rect width="14" height="14" fill="#3b579d" />
            <path d="M7.500 13V8H6V6h1.500V4.500Q7.500 2 10 2h2v2h-1.500Q10 4 10 5v1h2l-.3 2H10v5z" fill="#fff" />
          </svg>
          Share on Facebook
        </button>
        <div className="flex flex-col items-center gap-[5px]">
          <GreenButton icon={<FaRegStar className="mr-1 size-3.5" />}>Додати у блокнот</GreenButton>
          <div className="pl-3.5">
            <GreenButton icon={<FaRegFilePdf className="mr-1 h-3.5 w-3" />}>PDF друкувати</GreenButton>
          </div>
          <GreenButton icon={<FaRegFilePdf className="h-3.5 w-3" />}>PDF друкувати (Inkatlas)</GreenButton>
        </div>
      </div>
      <div className="mt-[25px] flex flex-col gap-5">
        <Panel title="Додаткові параметри трека">
          <ul className="flex flex-col gap-3 px-4 pt-[15px] pb-[27px]">
            {extraActions.map((action) => (
              <li key={action.label} className="flex items-center gap-[7px]">
                <GreenButton icon={action.icon} block>{action.label}</GreenButton>
                <a href="#" aria-label="Довідка" className="shrink-0 pt-px text-[#1b90c8]"><FaInfoCircle className="size-[13px]" /></a>
              </li>
            ))}
          </ul>
        </Panel>
        <Panel title="Завантажити як">
          <div className="flex flex-col px-[15px] pt-[15px] pb-4">
            <div className="relative mb-[15px]">
              <select aria-label="Завантажити як" className="h-[34px] w-full appearance-none rounded border border-[#ccc] bg-white px-4 pt-px text-sm text-[#555]">
                <option>GPX Track</option>
              </select>
              <span className="pointer-events-none absolute top-3.5 right-1.5 border-x-3 border-t-6 border-x-transparent border-t-[#444]" />
            </div>
            <div className="flex flex-col gap-3">
              <GreenButton icon={<FaDownload className="size-3.5" />} block>завантажити</GreenButton>
              <GreenButton icon={<FaCogs className="size-4" />} block>показати опції</GreenButton>
            </div>
            <hr className="mt-8 mb-[21px] border-[#e8e8e8]" />
            <p className="mb-1.5 text-center text-xs leading-5">
              If you're looking for an offline map for your Garmin GPS, smartphone or other format that is exactly tailored to this route, try BBBike.org:
            </p>
            <GreenButton icon={<FaMap className="size-3.5" />} block>offline map</GreenButton>
          </div>
        </Panel>
      </div>
    </aside>
  );
}

function ScrollBar() {
  return (
    <div className="flex w-4 shrink-0 flex-col items-center bg-[#f1f1f1] py-1.5">
      <span className="border-x-4 border-b-4 border-x-transparent border-b-[#444]" />
      <span className="mt-[156px] h-[394px] w-3 bg-[#c1c1c1]" />
      <span className="mt-auto border-x-4 border-t-4 border-x-transparent border-t-[#444]" />
    </div>
  );
}

export default function App() {
  return (
    <div className="flex h-screen flex-col overflow-hidden border-b-2 border-[#d4d4d4] bg-white font-['Open_Sans',sans-serif] text-[#444]">
      <BrowserChrome />
      <div className="flex min-h-0 flex-1">
        <div className="relative flex min-w-0 flex-1 flex-col">
          <SiteHeader />
          <main className="min-h-0 flex-1 overflow-hidden">
            <div className="mx-auto grid max-w-[970px] grid-cols-[minmax(0,637fr)_minmax(0,303fr)] gap-[30px]">
              <div className="min-w-0 pt-[7px]">
                <MapPanel />
                <div className="mt-[17px]">
                  <ElevationChart />
                </div>
                <p className="mt-[-2px] text-sm leading-5">Профіль висот (634 m в 1 576 m)</p>
                <div className="mt-[10px] grid grid-cols-3 gap-[30px]">
                  {stats.map((stat) => (
                    <Panel
                      key={stat.title}
                      title={
                        <>
                          {stat.title}
                          {stat.cogs && <FaCogs className="size-4 text-[#1b96c8]" />}
                        </>
                      }
                    >
                      <div className="h-[91px] pt-[19px] text-center text-4xl leading-[44px]">{stat.value}</div>
                    </Panel>
                  ))}
                </div>
                <span className="mt-[21px] inline-block rounded-xs bg-[#337ab7] px-[5px] text-[11px] leading-5 font-bold text-white">GPSies-Index 17,25</span>
              </div>
              <Sidebar />
            </div>
          </main>
          <button aria-label="Нагору" className="absolute right-[5px] bottom-[5px] flex h-[38px] w-[42px] items-center justify-center rounded-xs bg-[#666]">
            <svg viewBox="0 0 12 7" className="h-[7px] w-3"><path d="M1 6l5-4 5 4" fill="none" stroke="#fff" strokeWidth="1.600" /></svg>
          </button>
        </div>
        <ScrollBar />
      </div>
    </div>
  );
}
